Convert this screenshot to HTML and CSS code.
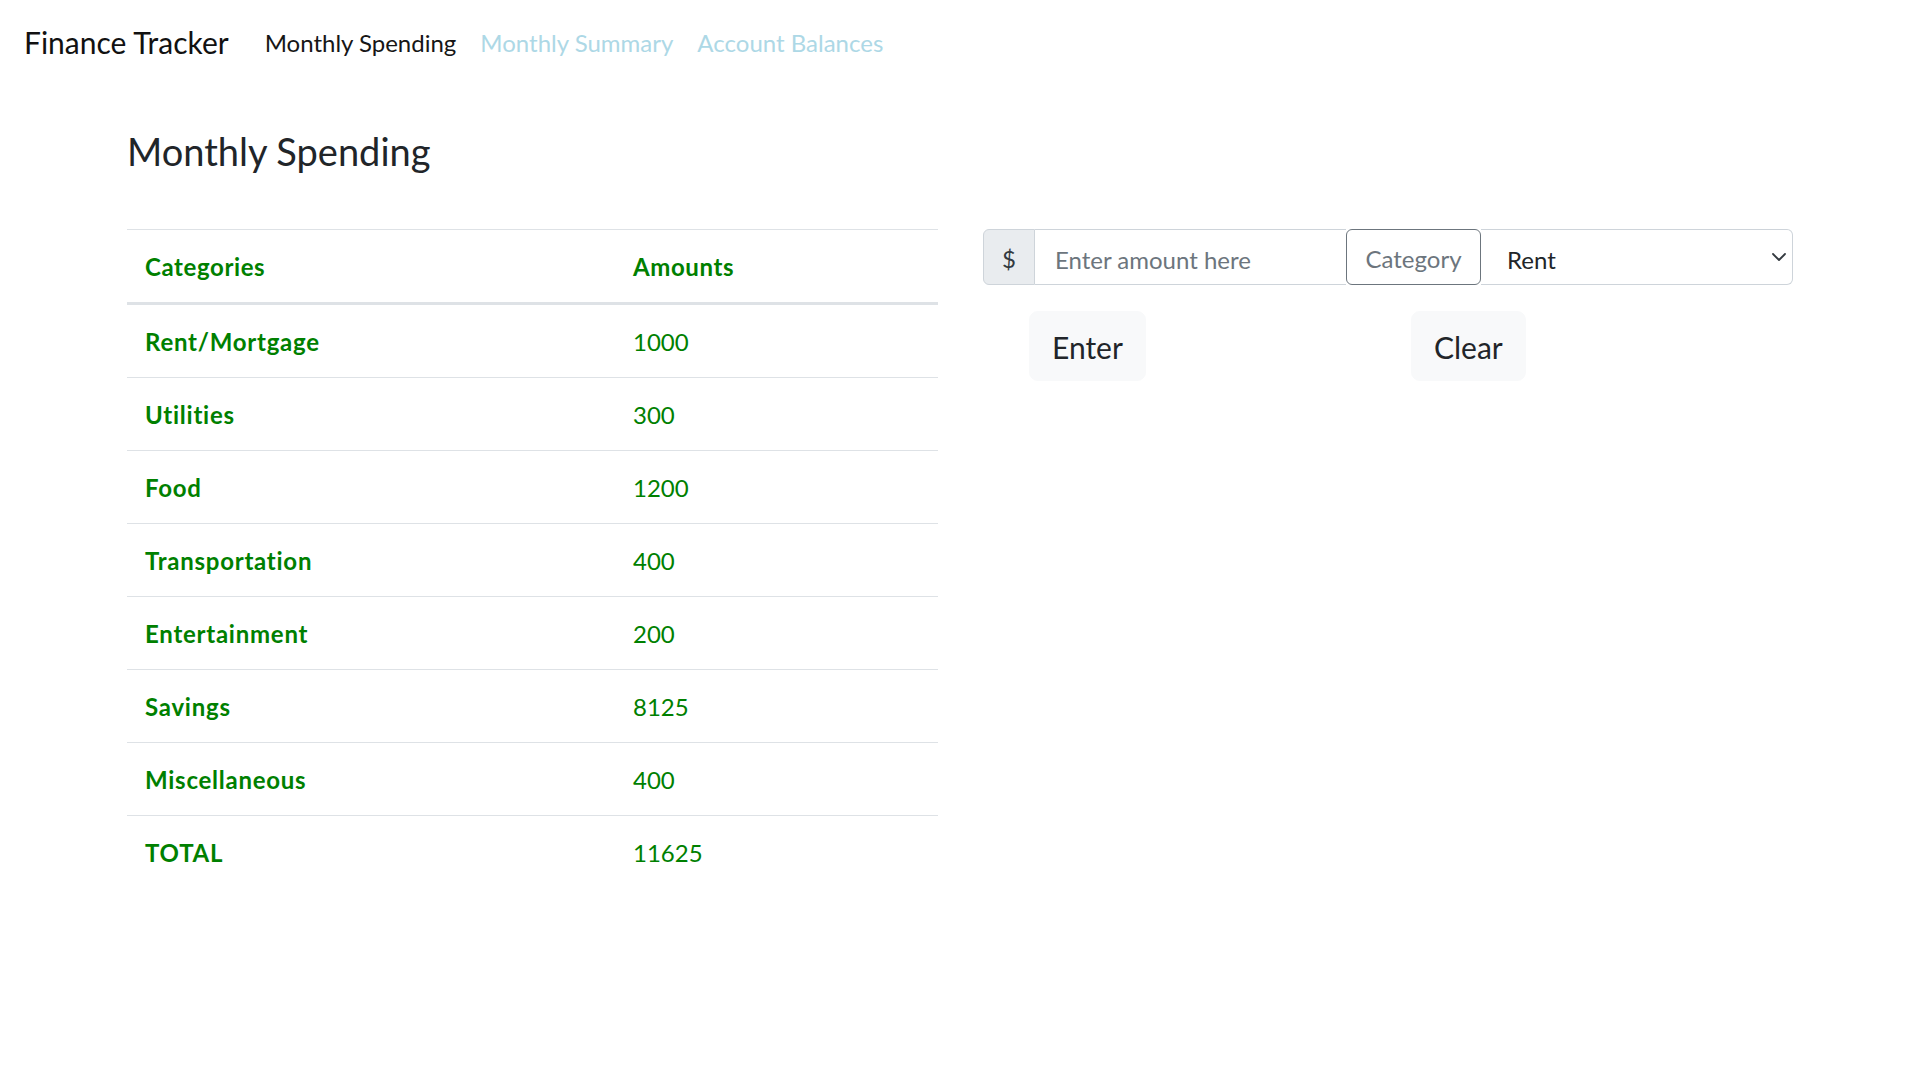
FILE: index.html
```html
<!DOCTYPE html>
<html lang="en">
<head>
<meta charset="utf-8">
<title>Finance Tracker</title>
<link rel="stylesheet" href="styles.css">
</head>
<body>
<nav class="navbar">
  <a class="brand" href="#">Finance Tracker</a>
  <ul class="nav">
    <li><a class="nav-link active" href="#">Monthly Spending</a></li>
    <li><a class="nav-link" href="#">Monthly Summary</a></li>
    <li><a class="nav-link" href="#">Account Balances</a></li>
  </ul>
</nav>
<main class="page">
  <h2 class="title">Monthly Spending</h2>
  <div class="content">
    <table class="spending">
      <thead>
        <tr><th class="col-cat">Categories</th><th>Amounts</th></tr>
      </thead>
      <tbody>
        <tr><td class="cat">Rent/Mortgage</td><td>1000</td></tr>
        <tr><td class="cat">Utilities</td><td>300</td></tr>
        <tr><td class="cat">Food</td><td>1200</td></tr>
        <tr><td class="cat">Transportation</td><td>400</td></tr>
        <tr><td class="cat">Entertainment</td><td>200</td></tr>
        <tr><td class="cat">Savings</td><td>8125</td></tr>
        <tr><td class="cat">Miscellaneous</td><td>400</td></tr>
        <tr><td class="cat">TOTAL</td><td>11625</td></tr>
      </tbody>
    </table>
    <div class="entry">
      <div class="input-group">
        <span class="addon">$</span>
        <input class="amount" type="text" placeholder="Enter amount here">
        <button class="cat-btn" type="button">Category</button>
        <div class="select-wrap">
          <select class="cat-select">
            <option>Rent</option>
            <option>Utilities</option>
            <option>Food</option>
          </select>
          <svg class="chev" width="14" height="8" viewBox="0 0 14 8"><path d="M1 1 L7 7 L13 1" fill="none" stroke="#343a40" stroke-width="1.8" stroke-linecap="round" stroke-linejoin="round"/></svg>
        </div>
      </div>
      <div class="actions">
        <div class="slot"><button class="btn" type="button">Enter</button></div>
        <div class="slot"><button class="btn" type="button">Clear</button></div>
      </div>
    </div>
  </div>
</main>
</body>
</html>
```
FILE: styles.css
```css
html, body {
  margin: 0;
  padding: 0;
  background: #ffffff;
}

body {
  font-family: Lato, "Open Sans", "Liberation Sans", sans-serif;
  color: #212529;
}

.navbar {
  display: flex;
  align-items: baseline;
  padding: 12px 0 12px 24px;
}

.brand {
  font-size: 30px;
  line-height: 45px;
  padding: 7.5px 0;
  margin-right: 24px;
  color: #111111;
  text-decoration: none;
}

.nav {
  display: flex;
  list-style: none;
  margin: 0;
  padding: 0;
}

.nav-link {
  display: block;
  font-size: 24px;
  line-height: 36px;
  padding: 12px;
  color: #add8e6;
  text-decoration: none;
  position: relative;
  top: -1.5px;
}

.nav-link.active {
  color: #161616;
}

.page {
  padding-left: 127px;
}

.title {
  margin: 42.5px 0 54px 0;
  font-size: 38px;
  line-height: 1.2;
  font-weight: 400;
  color: #212529;
}

.content {
  display: flex;
  align-items: flex-start;
  gap: 45px;
}

.spending {
  width: 811px;
  border-collapse: collapse;
}

.spending th,
.spending td {
  padding: 19px 18px 17px 18px;
  font-size: 24px;
  line-height: 36px;
  color: #008000;
  text-align: left;
  border-bottom: 1px solid #dee2e6;
}

.spending th {
  font-weight: 700;
  letter-spacing: 0.6px;
  border-top: 1px solid #dee2e6;
  border-bottom: 3px solid #dee2e6;
}

.spending .col-cat {
  width: 452px;
}

.spending td.cat {
  font-weight: 700;
  letter-spacing: 0.75px;
}

.spending tbody tr:last-child td {
  border-bottom: none;
}

.entry {
  width: 810px;
}

.input-group {
  display: flex;
  height: 56px;
}

.addon {
  box-sizing: border-box;
  flex: none;
  width: 52px;
  display: flex;
  align-items: center;
  justify-content: center;
  padding-top: 3px;
  background: #e9ecef;
  border: 1px solid #ced4da;
  border-radius: 6px 0 0 6px;
  font-size: 24px;
  color: #343a40;
}

.amount {
  flex: none;
  width: 311px;
  box-sizing: border-box;
  height: 56px;
  margin: 0;
  border: 1px solid #ced4da;
  border-left: none;
  border-right: none;
  padding: 12px 20px 6px 20px;
  font-family: inherit;
  font-size: 24px;
  line-height: 36px;
  color: #212529;
  background: #ffffff;
  outline: none;
}

.amount::placeholder {
  color: #6c757d;
}

.cat-btn {
  flex: none;
  box-sizing: border-box;
  width: 135px;
  height: 56px;
  margin: 0;
  border: 1px solid #6c757d;
  border-radius: 6px;
  background: #ffffff;
  color: #6c757d;
  font-family: inherit;
  font-size: 24px;
  padding: 4px 0 0 0;
}

.select-wrap {
  flex: none;
  width: 312px;
  position: relative;
}

.cat-select {
  display: block;
  box-sizing: border-box;
  width: 100%;
  height: 56px;
  margin: 0;
  -webkit-appearance: none;
  appearance: none;
  border: 1px solid #ced4da;
  border-left: none;
  border-radius: 0 6px 6px 0;
  padding: 12px 54px 6px 26px;
  font-family: inherit;
  font-size: 24px;
  line-height: 36px;
  color: #212529;
  background: #ffffff;
  outline: none;
}

.chev {
  position: absolute;
  right: 7px;
  top: 24px;
  pointer-events: none;
}

.actions {
  display: flex;
  margin-top: 26px;
  padding-left: 46px;
}

.slot {
  width: 382px;
}

.btn {
  box-sizing: border-box;
  height: 70px;
  padding: 13px 22px 11px 22px;
  border: 1px solid #f8f9fa;
  border-radius: 9px;
  background: #f8f9fa;
  color: #212529;
  font-family: inherit;
  font-size: 30px;
  line-height: 44px;
}
```
